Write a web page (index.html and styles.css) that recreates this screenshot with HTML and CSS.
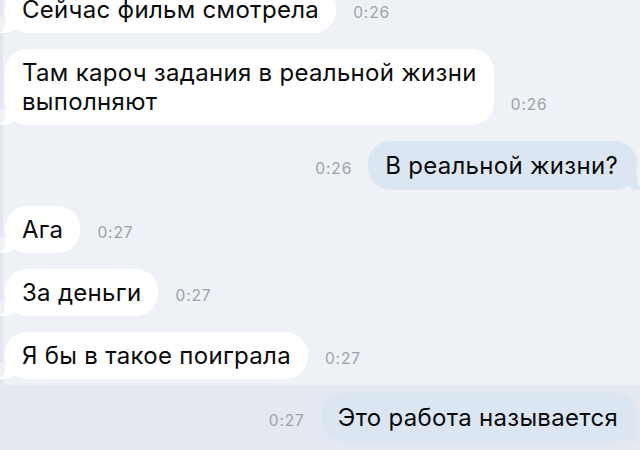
FILE: index.html
```html
<!DOCTYPE html>
<html lang="ru">
<head>
<meta charset="utf-8">
<title>Чат</title>
<link rel="stylesheet" href="styles.css">
</head>
<body>
<div class="screen">
  <div class="chat">
    <div class="row in">
      <div class="bubble">Сейчас фильм смотрела</div>
      <span class="time">0:26</span>
    </div>
    <div class="row in">
      <div class="bubble">Там кароч задания в реальной жизни<br>выполняют</div>
      <span class="time">0:26</span>
    </div>
    <div class="row out">
      <span class="time">0:26</span>
      <div class="bubble">В реальной жизни?</div>
    </div>
    <div class="row in">
      <div class="bubble">Ага</div>
      <span class="time">0:27</span>
    </div>
    <div class="row in">
      <div class="bubble">За деньги</div>
      <span class="time">0:27</span>
    </div>
    <div class="row in">
      <div class="bubble">Я бы в такое поиграла</div>
      <span class="time">0:27</span>
    </div>
  </div>
  <div class="unread">
    <div class="row out">
      <span class="time">0:27</span>
      <div class="bubble">Это работа называется</div>
    </div>
  </div>
</div>
</body>
</html>
```

FILE: styles.css
```css
html, body {
  margin: 0;
  padding: 0;
  background: #eef1f6;
}

body {
  width: 640px;
  height: 450px;
  overflow: hidden;
  font-family: Inter, "Noto Sans", sans-serif;
  color: #0b0b0b;
}

.screen {
  --bg: #eef1f6;
  height: 450px;
  background: linear-gradient(to right, #e3e7ed 0 3px, #eef1f6 3px);
  overflow: hidden;
}

.chat {
  display: flex;
  flex-direction: column;
  gap: 16px;
  margin-top: -14px;
}

.row {
  display: flex;
  align-items: flex-end;
  align-items: last baseline;
  gap: 17px;
  padding: 0 3px 0 5px;
}

.row.out {
  justify-content: flex-end;
  gap: 16px;
}

.bubble {
  position: relative;
  z-index: 0;
  background: #ffffff;
  border-radius: 22px;
  padding: 9px 17px 9px 17px;
  font-size: 24px;
  line-height: 29px;
  letter-spacing: 0.3px;
}

.in .bubble::before {
  content: "";
  position: absolute;
  left: -5px;
  bottom: 0;
  width: 18px;
  height: 14px;
  background: #ffffff;
  border-bottom-right-radius: 14px 12px;
  z-index: -1;
}

.in .bubble::after {
  content: "";
  position: absolute;
  left: -12px;
  bottom: 0;
  width: 12px;
  height: 16px;
  background: var(--bg);
  border-bottom-right-radius: 10px 8px;
}

.out .bubble {
  background: #dce6f3;
  padding: 10px 19px 10px 17px;
}

.out .bubble::before {
  content: "";
  position: absolute;
  right: -5px;
  bottom: 0;
  width: 18px;
  height: 14px;
  background: #dce6f3;
  border-bottom-left-radius: 14px 12px;
  z-index: -1;
}

.out .bubble::after {
  content: "";
  position: absolute;
  right: -12px;
  bottom: 0;
  width: 12px;
  height: 16px;
  background: var(--bg);
  border-bottom-left-radius: 10px 8px;
}

.time {
  font-size: 15.5px;
  color: #9da2aa;
  letter-spacing: 0.9px;
}

.unread {
  --bg: #e4e9f1;
  background: #e4e9f1;
  margin-top: 6px;
  padding-top: 8px;
  height: 64px;
}
```
